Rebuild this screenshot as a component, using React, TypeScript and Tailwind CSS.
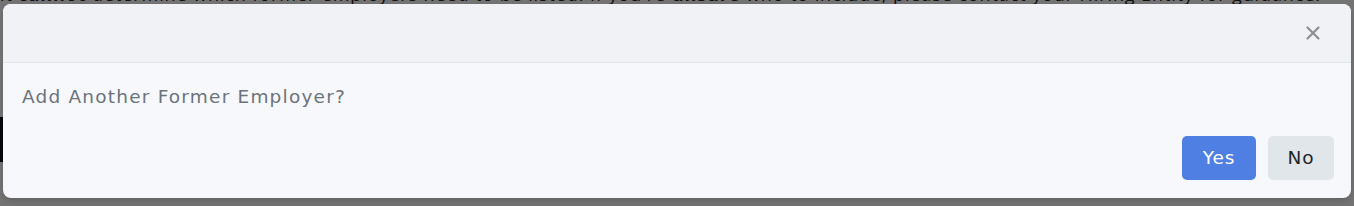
export default function App() {
  return (
    <div className="relative h-[206px] w-full overflow-hidden bg-white font-['Open_Sans',sans-serif]">
      {/* page content behind the overlay */}
      <p className="-mt-[18px] whitespace-nowrap text-[18px] leading-[24px] tracking-[0.9px] text-[#212529]">
        it <b>cannot</b> determine which former employers need to be listed. If you're <b>unsure</b> who to include, please contact your Hiring Entity for guidance.
      </p>
      <div className="mt-[111px] h-[45px] w-[40px] bg-[#0d1321]" />

      <div className="absolute inset-0 bg-black/55 px-[3px] pt-[4px]">
        <div className="flex h-[194px] flex-col overflow-hidden rounded-[8px] bg-[#f7f8fb] font-['DejaVu_Sans',sans-serif] shadow-md">
          <div className="flex h-[59px] shrink-0 items-center justify-end border-b border-[#e2e5ea] bg-[#f0f2f5] pr-[30px]">
            <button className="text-[#8a8f96]">
              <svg width="16" height="16" viewBox="0 0 16 16" fill="none" stroke="currentColor" strokeWidth="2.2" strokeLinecap="round">
                <path d="M2.5 2.5l11 11M13.5 2.5l-11 11" />
              </svg>
            </button>
          </div>
          <div className="px-[19px] pt-[20px] text-[18.5px] leading-[28px] tracking-[1.2px] text-[#6c737b]">
            Add Another Former Employer?
          </div>
          <div className="mt-auto flex justify-end gap-[12px] pb-[18px] pr-[17px]">
            <button className="h-[44px] w-[74px] rounded-[5px] bg-[#4f7fe3] text-[18.5px] tracking-[0.8px] text-white">Yes</button>
            <button className="h-[44px] w-[66px] rounded-[5px] bg-[#e1e6eb] text-[18.5px] tracking-[0.8px] text-[#212529]">No</button>
          </div>
        </div>
      </div>
    </div>
  );
}
